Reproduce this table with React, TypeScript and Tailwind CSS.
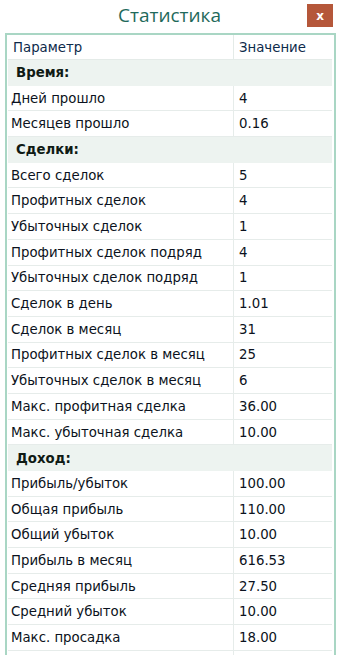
import React from "react";

type Row = { label: string; value?: string; section?: boolean };

const rows: Row[] = [
  { label: "Время:", section: true },
  { label: "Дней прошло", value: "4" },
  { label: "Месяцев прошло", value: "0.16" },
  { label: "Сделки:", section: true },
  { label: "Всего сделок", value: "5" },
  { label: "Профитных сделок", value: "4" },
  { label: "Убыточных сделок", value: "1" },
  { label: "Профитных сделок подряд", value: "4" },
  { label: "Убыточных сделок подряд", value: "1" },
  { label: "Сделок в день", value: "1.01" },
  { label: "Сделок в месяц", value: "31" },
  { label: "Профитных сделок в месяц", value: "25" },
  { label: "Убыточных сделок в месяц", value: "6" },
  { label: "Макс. профитная сделка", value: "36.00" },
  { label: "Макс. убыточная сделка", value: "10.00" },
  { label: "Доход:", section: true },
  { label: "Прибыль/убыток", value: "100.00" },
  { label: "Общая прибыль", value: "110.00" },
  { label: "Общий убыток", value: "10.00" },
  { label: "Прибыль в месяц", value: "616.53" },
  { label: "Средняя прибыль", value: "27.50" },
  { label: "Средний убыток", value: "10.00" },
  { label: "Макс. просадка", value: "18.00" },
  { label: "", value: "" },
];

export default function App() {
  return (
    <div
      className="w-[339px] h-[655px] overflow-hidden bg-white"
      style={{ fontFamily: '"DejaVu Sans", Verdana, sans-serif' }}
    >
      <div className="relative h-[33px] flex items-center justify-center">
        <span
          className="text-[19px] text-[#1f6a5b] leading-none -mt-[2px]"
          style={{ fontFamily: '"Open Sans", "Noto Sans", sans-serif' }}
        >
          Статистика
        </span>
        <div className="absolute left-[307px] top-[4px] w-[26px] h-[23px] bg-[#b5573a] flex items-center justify-center text-white text-[12px] font-bold leading-none">
          x
        </div>
      </div>
      <div className="ml-[5px] w-[331px] h-[630px] border-2 border-b-0 border-[#a9d6c4] px-[1px] pr-[2px] text-[13.3px] text-[#0b1220] overflow-hidden">
        <div className="flex h-[25px] items-center border-b border-[#e4ebe8]">
          <div className="w-[226px] pl-[5px] pt-[2px] border-r border-[#e4ebe8] h-full flex items-center text-[#0d2a4a]">
            Параметр
          </div>
          <div className="flex-1 pl-[5px] pt-[2px] text-[#0d2a4a]">Значение</div>
        </div>
        {rows.map((r, i) =>
          r.section ? (
            <div
              key={i}
              className="flex h-[25.7px] items-center bg-[#edf3f0] pl-[8px] pt-[1px] font-bold text-[#0f1a14]"
            >
              {r.label}
            </div>
          ) : (
            <div key={i} className="flex h-[25.7px] border-b border-[#e6ecea]">
              <div className="w-[226px] pl-[3px] pt-[1px] border-r border-[#e6ecea] flex items-center whitespace-nowrap">
                {r.label}
              </div>
              <div className="flex-1 pl-[5px] pt-[1px] flex items-center">{r.value}</div>
            </div>
          )
        )}
      </div>
    </div>
  );
}
